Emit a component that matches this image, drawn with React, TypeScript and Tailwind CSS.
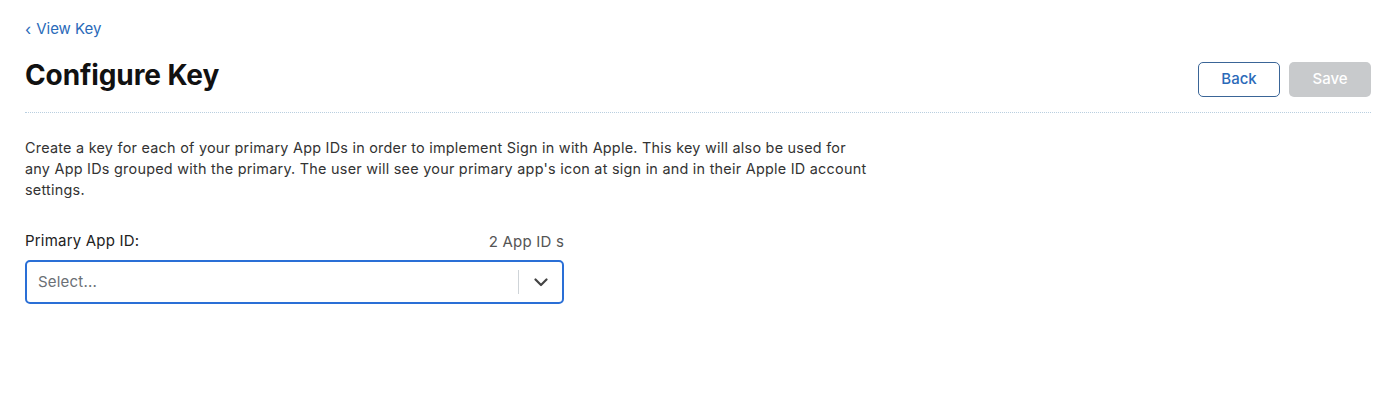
import React from "react";

export default function App() {
  return (
    <div className="w-[1400px] h-[411px] bg-white font-['Inter','Liberation_Sans',sans-serif] text-[#1d1d1f]">
      <div className="pl-[25px] pr-[29px] pt-[19px]">
        <a className="flex items-center gap-[5px] text-[15px] leading-[20px] text-[#2a6ab9] h-[20px]">
          <span className="text-[16px] leading-[20px] -mt-[1px]">‹</span>
          <span>View Key</span>
        </a>
        <div className="flex items-start justify-between mt-[18px] pb-[15px] border-b border-dotted border-[#b9cfe0]">
          <h1 className="text-[28px] leading-[36px] font-bold tracking-[-0.1px] text-[#111]">Configure Key</h1>
          <div className="flex gap-[9px] mt-[5px]">
            <button className="w-[82px] h-[35px] rounded-[5px] border-[1.5px] border-[#3a6597] text-[15px] text-[#2a6ab9] font-medium bg-white">Back</button>
            <button className="w-[82px] h-[35px] rounded-[5px] bg-[#c8cacc] text-[15px] text-white font-medium">Save</button>
          </div>
        </div>
        <p className="mt-[24px] w-[842px] text-[14.4px] leading-[21px] tracking-[0.25px] text-[#333]">
          Create a key for each of your primary App IDs in order to implement Sign in with Apple. This key will also be used for any App IDs grouped with the primary. The user will see your primary app's icon at sign in and in their Apple ID account settings.
        </p>
        <div className="w-[539px] mt-[30px]">
          <div className="flex items-center justify-between">
            <label className="text-[15px] leading-[20px] tracking-[0.2px] text-[#222]">Primary App ID:</label>
            <span className="text-[15px] leading-[20px] tracking-[0.2px] text-[#555] mt-[2px]">2 App ID s</span>
          </div>
          <div className="mt-[8px] h-[44px] rounded-[5px] border-2 border-[#2a6fd6] flex items-center">
            <span className="flex-1 pl-[11px] text-[15px] tracking-[0.2px] text-[#6b7075]">Select...</span>
            <div className="w-px h-[24px] bg-[#cfd4d8]" />
            <div className="w-[43px] flex items-center justify-center">
              <svg width="14" height="9" viewBox="0 0 14 9" fill="none">
                <path d="M1.5 1.5L7 7L12.5 1.5" stroke="#444" strokeWidth="2.2" strokeLinecap="round" strokeLinejoin="round" />
              </svg>
            </div>
          </div>
        </div>
      </div>
    </div>
  );
}
